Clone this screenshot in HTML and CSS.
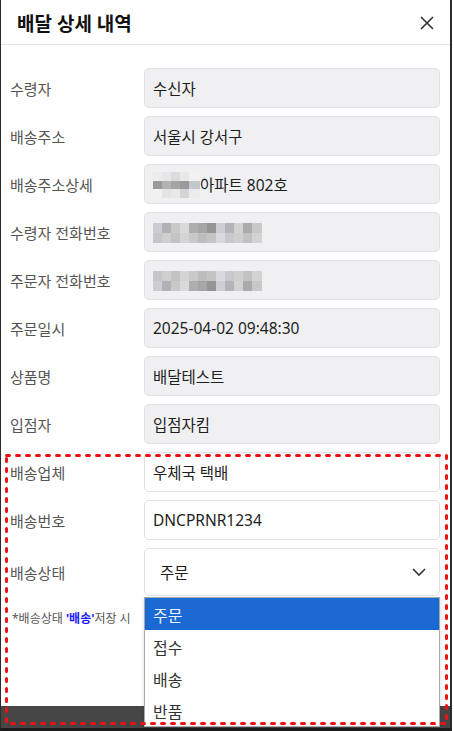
FILE: index.html
```html
<!DOCTYPE html>
<html lang="ko">
<head>
  <meta charset="UTF-8">
  <title>배달 상세 내역</title>
  <link rel="stylesheet" href="styles.css">
</head>
<body>

  <div class="frame">
    <div class="modal">
      <header class="modal-head">
        <h2>배달 상세 내역</h2>
        <button class="close" type="button">
          <svg width="14" height="14" viewBox="0 0 14 14">
            <path d="M1 1 L13 13 M13 1 L1 13" stroke="#333" stroke-width="1.6" fill="none"/>
          </svg>
        </button>
      </header>

      <div class="modal-body">
        <div class="form-grid">
          <label>수령자</label>
          <div class="field readonly">수신자</div>

          <label>배송주소</label>
          <div class="field readonly">서울시 강서구</div>

          <label>배송주소상세</label>
          <div class="field readonly">
            <span class="mosaic mosaic-addr">
              <i class="m-row r1"></i><i class="m-row r2"></i><i class="m-row r3"></i>
            </span>아파트 802호
          </div>

          <label>수령자 전화번호</label>
          <div class="field readonly">
            <span class="mosaic mosaic-phone">
              <i class="m-row p1"></i><i class="m-row p2"></i>
            </span>
          </div>

          <label>주문자 전화번호</label>
          <div class="field readonly">
            <span class="mosaic mosaic-phone">
              <i class="m-row p2"></i><i class="m-row p1"></i>
            </span>
          </div>

          <label>주문일시</label>
          <div class="field readonly">2025-04-02 09:48:30</div>

          <label>상품명</label>
          <div class="field readonly">배달테스트</div>

          <label>입점자</label>
          <div class="field readonly">입점자킴</div>

          <label>배송업체</label>
          <div class="field">우체국 택배</div>

          <label>배송번호</label>
          <div class="field">DNCPRNR1234</div>

          <label>배송상태</label>
          <div class="select">
            <span>주문</span>
            <svg width="14" height="8" viewBox="0 0 14 8">
              <path d="M1 1 L7 7 L13 1" stroke="#333" stroke-width="1.6" fill="none"/>
            </svg>
            <ul class="options">
              <li class="active">주문</li>
              <li>접수</li>
              <li>배송</li>
              <li>반품</li>
            </ul>
          </div>
        </div>

        <p class="note">*배송상태 <b>'배송'</b>저장 시</p>
      </div>
    </div>

    <div class="bottom-bar"></div>

    <!-- red dashed box round the delivery fields -->
    <svg class="mark" width="443" height="271" viewBox="0 0 443 271">
      <rect x="1.5" y="1.5" width="440" height="268" fill="none" stroke="#ee1111" stroke-width="3"
            stroke-dasharray="3 7" stroke-linecap="round"/>
    </svg>
  </div>

</body>
</html>
```

FILE: styles.css
```css
* {
  box-sizing: border-box;
}

body {
  margin: 0;
  background: #ffffff;
  font-family: "Noto Sans", "Noto Sans CJK KR", sans-serif;
}

.frame {
  position: relative;
  width: 452px;
  height: 731px;
  display: flex;
  flex-direction: column;
  background: #464646;
  border-left: 1px solid #2b2b2b;
  border-right: 2px solid #2b2b2b;
  border-bottom: 3px solid #1c1c1c;
}

.modal {
  background: #fff;
  height: 706px;
  flex-shrink: 0;
}

.modal-head {
  height: 45px;
  display: flex;
  align-items: center;
  justify-content: space-between;
  padding: 2px 16px 0 16px;
  border-bottom: 1px solid #e3e3e3;
}

.modal-head h2 {
  margin: 0;
  font-size: 19px;
  font-weight: 700;
  color: #111;
}

.close {
  display: flex;
  border: none;
  background: none;
  padding: 0;
  cursor: pointer;
}

.modal-body {
  padding: 23px 10px 0 9px;
}

.form-grid {
  display: grid;
  grid-template-columns: 134px 1fr;
  row-gap: 8px;
  align-items: center;
}

.form-grid label {
  font-size: 15px;
  color: #555;
}

.field {
  height: 40px;
  display: flex;
  align-items: center;
  padding: 0 8px;
  border: 1px solid #dfe0e3;
  border-radius: 5px;
  font-size: 15.5px;
  color: #1e1e1e;
  background: #fff;
}

.field.readonly {
  background: #f0f0f2;
}

/* pixelated blocks over private data */
.mosaic {
  display: flex;
  flex-direction: column;
}

.m-row {
  display: block;
}

.mosaic-addr {
  width: 47px;
  margin-top: 1px;
}

.mosaic-addr .m-row {
  height: 9px;
}

.mosaic-addr .r1 {
  background: linear-gradient(to right, #ececec 0 9px, #e6e6e8 9px 18px, #dcdcdc 18px 27px, #e9e9e9 27px 36px, #f2f2f2 36px);
}

.mosaic-addr .r2 {
  height: 8px;
  background: linear-gradient(to right, #9b9b9b 0 9px, #b3b3b3 9px 18px, #a4a4a4 18px 27px, #9a9a9a 27px 36px, #c4c8cc 36px);
}

.mosaic-addr .r3 {
  background: linear-gradient(to right, #f1f1f1 0 9px, #e4e4e4 9px 18px, #e8e8e8 18px 27px, #d5d5d5 27px 36px, #ececec 36px);
}

.mosaic-phone {
  width: 109px;
  margin-top: 1px;
}

.mosaic-phone .m-row {
  height: 10px;
}

.mosaic-phone .p1 {
  background: linear-gradient(to right,
    #cdcdd1 0 9px, #b2b2b6 9px 18px, #c9c9c9 18px 27px, #d9d9d9 27px 36px,
    #aeaeae 36px 45px, #a6a6a6 45px 54px, #959595 54px 63px, #cfcfd3 63px 72px,
    #b4b4b8 72px 81px, #d2d2d2 81px 90px, #ababab 90px 99px, #c8c8c8 99px);
}

.mosaic-phone .p2 {
  background: linear-gradient(to right,
    #c6c6c8 0 9px, #cfcfd2 9px 18px, #c3c3c3 18px 27px, #d4d4d4 27px 36px,
    #c9c9c9 36px 45px, #bdbdbd 45px 54px, #c4c4c4 54px 63px, #dadade 63px 72px,
    #c9c9cd 72px 81px, #cfcfcf 81px 90px, #c2c2c2 90px 99px, #d3d3d3 99px);
}

.select {
  position: relative;
  height: 48px;
  display: flex;
  align-items: center;
  justify-content: space-between;
  padding: 0 13px 0 15px;
  border: 1px solid #dfe0e3;
  border-radius: 5px;
  font-size: 15.5px;
  color: #1e1e1e;
  background: #fff;
}

.options {
  position: absolute;
  top: calc(100% + 2px);
  left: -1px;
  right: -1px;
  margin: 0;
  padding: 0;
  list-style: none;
  background: #fff;
  border: 1px solid #a9a9a9;
  box-shadow: 0 2px 4px rgba(0, 0, 0, 0.15);
  z-index: 2;
}

.options li {
  height: 32px;
  display: flex;
  align-items: center;
  padding: 2px 0 0 8px;
  font-size: 16px;
  color: #333;
}

.options li.active {
  background: #1b69d3;
  color: #eef3fb;
}

.note {
  margin: 13px 0 0 2px;
  font-size: 12px;
  color: #555;
}

.note b {
  color: #1a1aff;
}

.bottom-bar {
  flex: 1;
}

.mark {
  position: absolute;
  left: 4px;
  top: 454px;
  z-index: 3;
}
```
